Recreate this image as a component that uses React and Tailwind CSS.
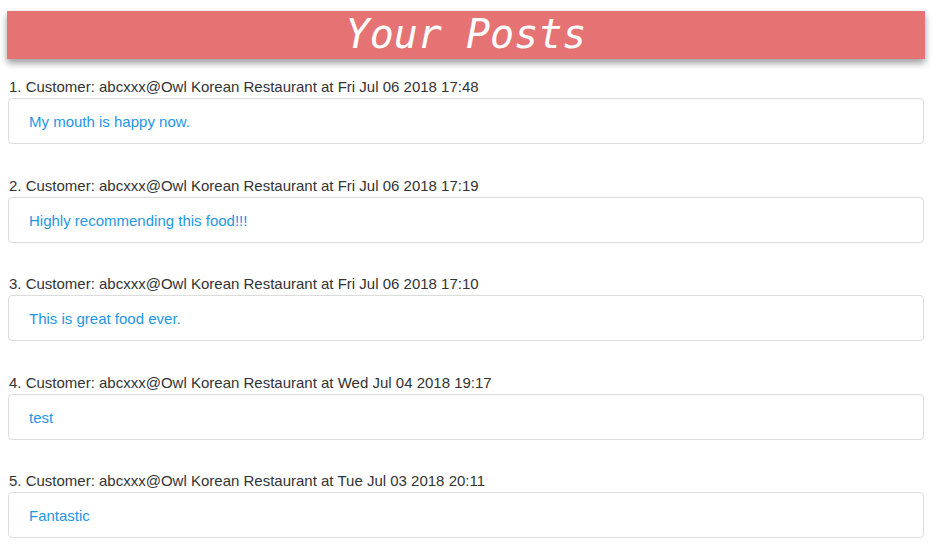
const posts = [
  { id: 1, at: 'Fri Jul 06 2018 17:48', text: 'My mouth is happy now.' },
  { id: 2, at: 'Fri Jul 06 2018 17:19', text: 'Highly recommending this food!!!' },
  { id: 3, at: 'Fri Jul 06 2018 17:10', text: 'This is great food ever.' },
  { id: 4, at: 'Wed Jul 04 2018 19:17', text: 'test' },
  { id: 5, at: 'Tue Jul 03 2018 20:11', text: 'Fantastic' },
];

export default function App() {
  return (
    <div className="min-h-screen bg-white font-['Liberation_Sans',Arial,sans-serif] pt-[11px]">
      <div className="ml-[7px] w-[918px] h-12 bg-[#e57373] shadow-[0_4px_7px_rgba(0,0,0,0.4)] flex items-center justify-center">
        <h1 className="text-white italic text-[40px] leading-none font-['DejaVu_Sans_Mono',monospace] mt-[-2px]">
          Your Posts
        </h1>
      </div>

      <div className="mt-[17px]">
        {posts.map((p) => (
          <div key={p.id} className="mb-[30.5px]">
            <div className="pl-[9px] pb-px text-[15px] leading-[21px] text-[#333]">
              {p.id}. Customer: abcxxx@Owl Korean Restaurant at {p.at}
            </div>
            <div className="ml-2 w-[916px] border border-[#dcdcdc] rounded-[4px] px-5 pt-[13px] pb-[11px] text-[15px] leading-5 text-[#1e96e6]">
              {p.text}
            </div>
          </div>
        ))}
      </div>
    </div>
  );
}
